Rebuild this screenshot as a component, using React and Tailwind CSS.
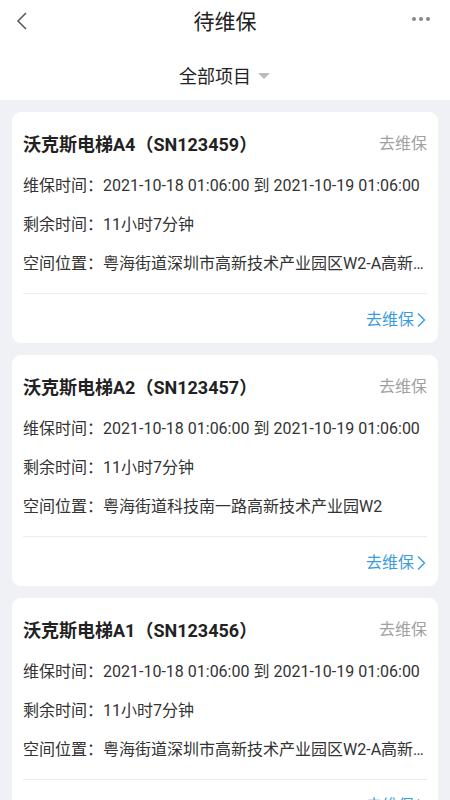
import React from 'react';

const tasks = [
  {
    id: 4,
    name: '沃克斯电梯A4（SN123459）',
    time: '2021-10-18 01:06:00 到 2021-10-19 01:06:00',
    remain: '11小时7分钟',
    place: '粤海街道深圳市高新技术产业园区W2-A高新技术产业园区',
  },
  {
    id: 2,
    name: '沃克斯电梯A2（SN123457）',
    time: '2021-10-18 01:06:00 到 2021-10-19 01:06:00',
    remain: '11小时7分钟',
    place: '粤海街道科技南一路高新技术产业园W2',
  },
  {
    id: 1,
    name: '沃克斯电梯A1（SN123456）',
    time: '2021-10-18 01:06:00 到 2021-10-19 01:06:00',
    remain: '11小时7分钟',
    place: '粤海街道深圳市高新技术产业园区W2-A高新技术产业园区',
  },
];

const TaskCard = ({ task }) => (
  <div className="bg-white rounded-[9px] px-[11px] pt-[20px] pb-[11px]">
    <div className="flex items-center justify-between h-[24px]">
      <span className="text-[18px] font-bold text-[#222]">{task.name}</span>
      <span className="text-[16px] text-[#a0a0a0]">去维保</span>
    </div>
    <p className="mt-[18px] h-[24px] leading-[24px] text-[16px] text-[#333] whitespace-nowrap">
      维保时间：{task.time}
    </p>
    <p className="mt-[15px] h-[24px] leading-[24px] text-[16px] text-[#333]">
      剩余时间：{task.remain}
    </p>
    <p className="mt-[15px] h-[24px] leading-[24px] text-[16px] text-[#333] truncate">
      空间位置：{task.place}
    </p>
    <div className="mt-[17px] border-t border-[#ececec]" />
    <div className="mt-[14px] flex justify-end items-center h-[24px] text-[16px] text-[#3a9be0]">
      <span>去维保</span>
      <svg width="11" height="16" viewBox="0 0 11 16" className="ml-[2px]">
        <path d="M2 1.5 L8.5 8 L2 14.5" fill="none" stroke="#3a9be0" strokeWidth="1.4" />
      </svg>
    </div>
  </div>
);

export default function App() {
  return (
    <div
      className="w-[450px] h-[800px] overflow-hidden bg-[#eff1f4]"
      style={{ fontFamily: 'Roboto, "Noto Sans CJK SC", sans-serif' }}
    >
      {/* header */}
      <div className="bg-white">
        <div className="relative h-[46px] flex items-center justify-center">
          <svg width="12" height="18" viewBox="0 0 12 18" className="absolute left-[16px] top-[12px]">
            <path d="M10 1 L2 9 L10 17" fill="none" stroke="#555" strokeWidth="1.5" />
          </svg>
          <span className="text-[21px] text-[#222]">待维保</span>
          <div className="absolute right-[20px] top-[17px] flex gap-[3px]">
            <span className="w-[4px] h-[4px] rounded-full bg-[#888]" />
            <span className="w-[4px] h-[4px] rounded-full bg-[#888]" />
            <span className="w-[4px] h-[4px] rounded-full bg-[#888]" />
          </div>
        </div>
        <div className="h-[54px] flex items-center justify-center pt-[6px]">
          <span className="text-[18px] text-[#222]">全部项目</span>
          <svg width="14" height="8" viewBox="0 0 14 8" className="ml-[6px]">
            <path d="M1 1 L13 1 L7 7 Z" fill="#bbb" />
          </svg>
        </div>
      </div>

      {/* list */}
      <div className="px-[12px] pt-[12px] flex flex-col gap-[12px]">
        {tasks.map((t) => (
          <TaskCard key={t.id} task={t} />
        ))}
      </div>
    </div>
  );
}
